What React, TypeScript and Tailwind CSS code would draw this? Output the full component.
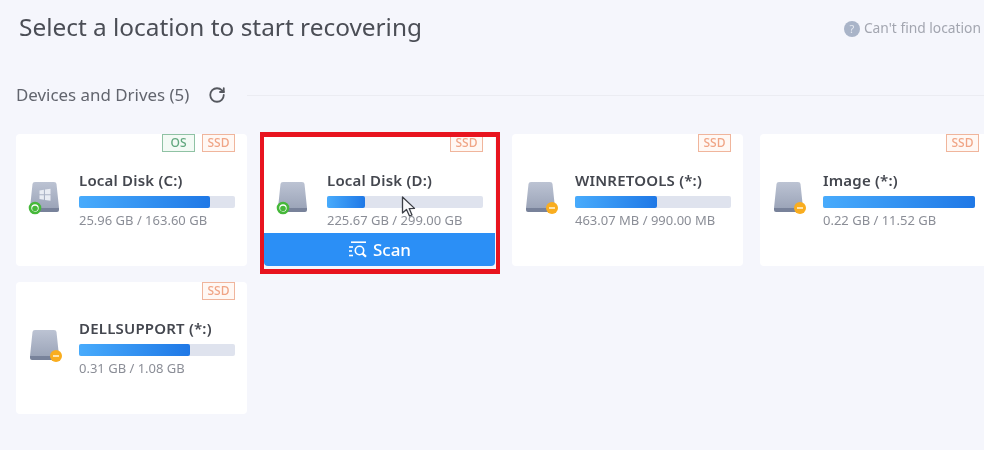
import React from 'react';
import { RotateCw } from 'lucide-react';

interface Drive {
  name: string;
  size: string;
  used: number;
  total?: number;
  status: 'ok' | 'locked';
  os?: boolean;
  scan?: boolean;
}

const drives: Drive[] = [
  { name: 'Local Disk (C:)', size: '25.96 GB / 163.60 GB', used: 131, status: 'ok', os: true },
  { name: 'Local Disk (D:)', size: '225.67 GB / 299.00 GB', used: 38, status: 'ok', scan: true },
  { name: 'WINRETOOLS (*:)', size: '463.07 MB / 990.00 MB', used: 82, status: 'locked' },
  { name: 'Image (*:)', size: '0.22 GB / 11.52 GB', used: 152, total: 152, status: 'locked' },
  { name: 'DELLSUPPORT (*:)', size: '0.31 GB / 1.08 GB', used: 111, status: 'locked' },
];

// Drive glyph with a small status dot
const DiskIcon = ({ status, windows }: { status: Drive['status']; windows?: boolean }) => (
  <svg width="36" height="36" viewBox="0 0 36 36" className="shrink-0">
    <defs>
      <linearGradient id="disk-body" x1="0" y1="0" x2="0" y2="1">
        <stop offset="0" stopColor="#bcc3d3" />
        <stop offset="1" stopColor="#9ca5b9" />
      </linearGradient>
    </defs>
    <path d="M4.5 4 Q4.7 2 7 2 H26 Q28.3 2 28.5 4 L31 28 H2 Z" fill="url(#disk-body)" />
    <path d="M2 28 H31 V30 Q31 32 29 32 H4 Q2 32 2 30 Z" fill="#78829a" />
    {windows && (
      <g fill="#e9ecf3">
        <path d="M11.5 10.5 L15.9 9.8 V14.2 H11.5 Z" />
        <path d="M17 9.6 L22.5 8.8 V14.2 H17 Z" />
        <path d="M11.5 15.3 H15.9 V19.7 L11.5 19 Z" />
        <path d="M17 15.3 H22.5 V20.7 L17 19.9 Z" />
      </g>
    )}
    {status === 'ok' ? (
      <g>
        <circle cx="7" cy="28" r="5" fill="#ffffff" stroke="#46b83a" strokeWidth="2.6" />
        <circle cx="7" cy="28.5" r="2.8" fill="#46b83a" />
      </g>
    ) : (
      <g>
        <circle cx="28" cy="28" r="6" fill="#f9ad1f" />
        <rect x="25" y="27.2" width="6" height="1.6" fill="#fff1cf" />
      </g>
    )}
  </svg>
);

const ScanIcon = () => (
  <svg width="20" height="17" viewBox="0 0 20 17" fill="none" stroke="#ffffff" strokeWidth="1.6">
    <path d="M3 1.2 H18" />
    <path d="M1 6 H5" />
    <path d="M1 10 H4" />
    <path d="M1 14.5 H5" />
    <circle cx="11.5" cy="9.5" r="4.2" />
    <path d="M14.6 12.6 L18 15.8" strokeWidth="2.2" />
  </svg>
);

const Tag = ({ label, tone }: { label: string; tone: 'green' | 'orange' }) => (
  <span
    className={`flex h-[18px] w-[33px] items-center justify-center border text-[12px] leading-none font-medium ${
      tone === 'green'
        ? 'border-[#8fc2a4] bg-[#f3faf5] text-[#62a87f]'
        : 'border-[#f0b59c] bg-[#fff8f4] text-[#f0a586]'
    }`}
  >
    {label}
  </span>
);

const DriveCard = ({ drive }: { drive: Drive }) => (
  <div className="relative flex h-[132px] flex-col rounded-[4px] bg-white">
    <div className="flex justify-end gap-[7px] pr-[12px]">
      {drive.os && <Tag label="OS" tone="green" />}
      <Tag label="SSD" tone="orange" />
    </div>
    <div className="mt-[20px] flex gap-[15px] pl-[12px]">
      <div className="mt-[8px]">
        <DiskIcon status={drive.status} windows={drive.os} />
      </div>
      <div className="w-[156px]">
        <div className="h-[18px] whitespace-nowrap text-[15px] leading-[16px] font-semibold tracking-[0.2px] text-[#44474f]">
          {drive.name}
        </div>
        <div
          className="mt-[6px] h-[12px] rounded-[2px] bg-[#dfe3ee]"
          style={{ width: drive.total ?? 156 }}
        >
          <div
            className="h-full rounded-[2px] bg-gradient-to-r from-[#48abfc] to-[#1f78e6]"
            style={{ width: drive.used }}
          />
        </div>
        <div className="mt-[3px] whitespace-nowrap text-[13px] leading-[18px] text-[#8b8e97]">
          {drive.size}
        </div>
      </div>
    </div>
    {drive.scan && (
      <>
        <div className="mt-auto flex h-[33px] items-center justify-center gap-[5px] rounded-b-[4px] bg-[#2b8ff6] text-[17px] font-medium text-white">
          <ScanIcon />
          <span>Scan</span>
        </div>
        {/* highlight box drawn over the card */}
        <div className="absolute -top-[2px] -left-[4px] h-[142px] w-[240px] border-x-[4px] border-t-[5px] border-b-[5px] border-[#e8141f]" />
        <svg width="16" height="22" viewBox="0 0 16 22" className="absolute top-[62px] left-[137px]">
          <path d="M1.5 1 V17 L5.5 13.5 L8.5 20 L11 19 L8.2 12.6 L13.5 12.4 Z" fill="#f7f7f9" stroke="#3c3f46" strokeWidth="1.3" strokeLinejoin="round" />
        </svg>
      </>
    )}
  </div>
);

export default function App() {
  return (
    <div className="h-[450px] w-[984px] overflow-hidden bg-[#f5f6fc] font-['Noto_Sans',sans-serif] blur-[0.6px]">
      <div className="flex items-center pt-[10px] pr-[3px] pl-[19px]">
        <h1 className="text-[24.4px] leading-[34px] font-normal text-[#4b4e56]">Select a location to start recovering</h1>
        <div className="ml-auto flex items-center gap-[4px] pt-[3px] text-[13.8px] text-[#a3a6b0]">
          <span className="flex h-[16px] w-[16px] items-center justify-center rounded-full bg-[#a9b4c8] text-[11px] leading-none text-[#e6eaf2]">
            ?
          </span>
          <span>Can't find location</span>
        </div>
      </div>
      <div className="mt-[39px] flex h-[24px] items-center pl-[16px]">
        <span className="text-[16.9px] text-[#62656e]">Devices and Drives (5)</span>
        <RotateCw size={18} strokeWidth={2.4} className="ml-[19px] text-[#55585f]" />
        <div className="ml-[21px] h-[1px] flex-1 bg-[#ebecf2]" />
      </div>
      <div className="mt-[27px] grid w-[991px] grid-cols-[repeat(4,231px)] gap-x-[17px] gap-y-[16px] pl-[16px]">
        {drives.map((drive) => (
          <DriveCard key={drive.name} drive={drive} />
        ))}
      </div>
    </div>
  );
}
